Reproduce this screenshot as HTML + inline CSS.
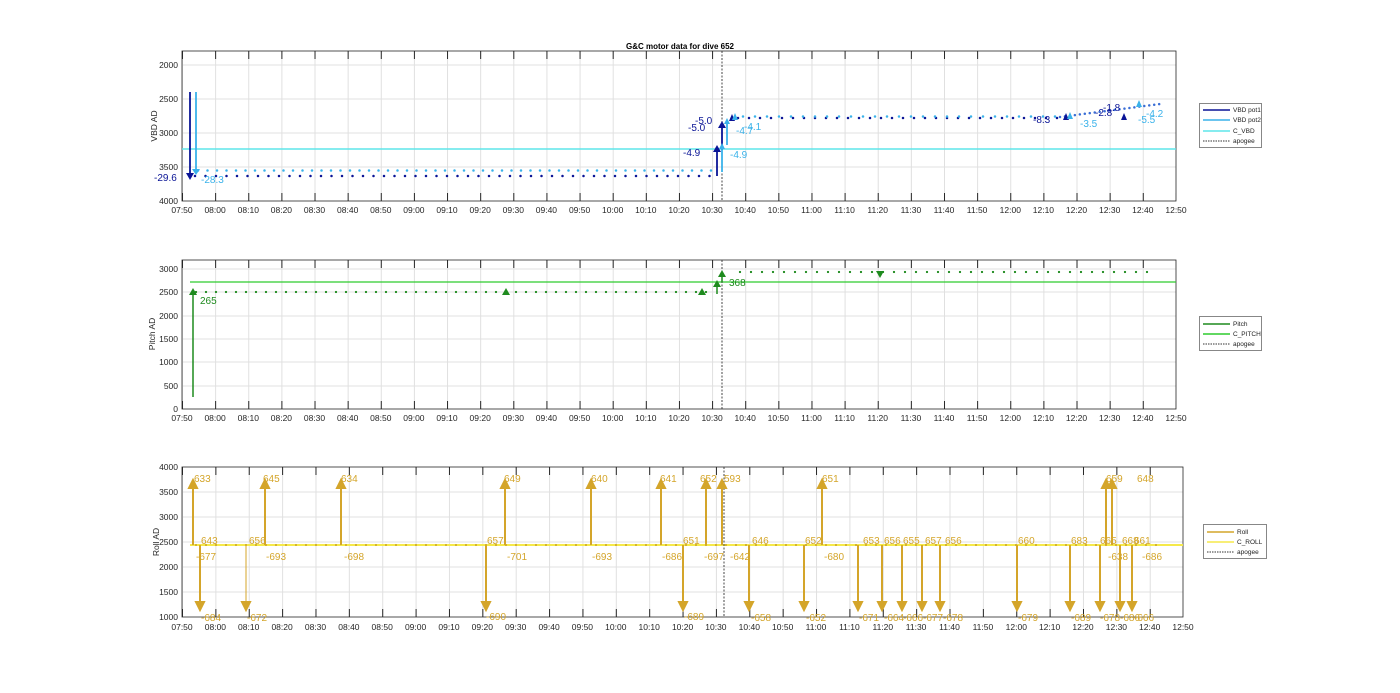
<!DOCTYPE html>
<html><head><meta charset="utf-8"><style>
html,body{margin:0;padding:0;background:#fff;}
svg{display:block;font-family:"Liberation Sans",sans-serif;}
.t{font-size:8.5px;fill:#262626;}
.g{stroke:#e0e0e0;stroke-width:1;}
.ax{fill:none;stroke:#262626;stroke-width:0.8;}
</style></head><body>
<svg width="1400" height="693" viewBox="0 0 1400 693">
<defs>
<pattern id="vg" x="182" y="0" width="33.13" height="700" patternUnits="userSpaceOnUse"><line x1="0.5" y1="0" x2="0.5" y2="700" stroke="#e0e0e0"/></pattern>
<pattern id="vg3" x="182" y="0" width="33.37" height="700" patternUnits="userSpaceOnUse"><line x1="0.5" y1="0" x2="0.5" y2="700" stroke="#e0e0e0"/></pattern>
<pattern id="tk" x="182" y="0" width="33.13" height="700" patternUnits="userSpaceOnUse"><line x1="0.5" y1="0" x2="0.5" y2="700" stroke="#262626"/></pattern>
<pattern id="tk3" x="182" y="0" width="33.37" height="700" patternUnits="userSpaceOnUse"><line x1="0.5" y1="0" x2="0.5" y2="700" stroke="#262626"/></pattern>
</defs>
<text x="680" y="49" font-size="8" font-weight="bold" text-anchor="middle" fill="#000">G&amp;C motor data for dive 652</text>

<!-- TOP AXES -->
<rect x="182" y="51" width="994" height="150" fill="url(#vg)"/>
<g class="g"><line x1="182" y1="65" x2="1176" y2="65"/><line x1="182" y1="99" x2="1176" y2="99"/><line x1="182" y1="133" x2="1176" y2="133"/><line x1="182" y1="167" x2="1176" y2="167"/></g>
<rect x="182" y="51" width="994" height="8" fill="url(#tk)"/><rect x="182" y="193" width="994" height="8" fill="url(#tk)"/>
<rect x="182" y="51" width="994" height="150" class="ax"/>
<line x1="182" y1="149" x2="1176" y2="149" stroke="#5ee6ea" stroke-width="1.5"/>
<line x1="722" y1="51" x2="722" y2="201" stroke="#333" stroke-dasharray="2 1.5" stroke-width="0.9"/>
<line x1="195" y1="176" x2="712" y2="176" stroke="#0a1496" stroke-width="2.5" stroke-linecap="round" stroke-dasharray="0 10.5"/>
<line x1="198" y1="170.5" x2="712" y2="170.5" stroke="#3ab2ea" stroke-width="2.5" stroke-linecap="round" stroke-dasharray="0 9.5"/>
<line x1="738" y1="118" x2="1060" y2="118" stroke="#0a1496" stroke-width="2.5" stroke-linecap="round" stroke-dasharray="0 11"/>
<line x1="743" y1="116.5" x2="1060" y2="116.5" stroke="#3ab2ea" stroke-width="2.5" stroke-linecap="round" stroke-dasharray="0 12"/>
<line x1="1060" y1="117" x2="1160" y2="104" stroke="#3a6ed6" stroke-width="2.5" stroke-linecap="round" stroke-dasharray="0 5"/>
<line x1="190" y1="92" x2="190" y2="176" stroke="#0a1496" stroke-width="1.8"/>
<polygon points="186,173 194,173 190,180" fill="#0a1496"/>
<line x1="196" y1="92" x2="196" y2="172" stroke="#3ab2ea" stroke-width="1.8"/>
<polygon points="192,169 200,169 196,175" fill="#3ab2ea"/>
<line x1="717" y1="176" x2="717" y2="150" stroke="#0a1496" stroke-width="1.8"/><polygon points="713,152 721,152 717,145" fill="#0a1496"/>
<line x1="722" y1="150" x2="722" y2="126" stroke="#0a1496" stroke-width="1.8"/><polygon points="718,128 726,128 722,121" fill="#0a1496"/>
<line x1="722" y1="172" x2="722" y2="148" stroke="#3ab2ea" stroke-width="1.8"/><polygon points="719,149 725,149 722,143" fill="#3ab2ea"/>
<line x1="727" y1="145" x2="727" y2="122" stroke="#3ab2ea" stroke-width="1.8"/><polygon points="724,124 730,124 727,118" fill="#3ab2ea"/>
<polygon points="729,121 735,121 732,114" fill="#0a1496"/><polygon points="732,120 738,120 735,113" fill="#3ab2ea"/>
<polygon points="1063,120 1069,120 1066,113" fill="#0a1496"/><polygon points="1067,119 1073,119 1070,112" fill="#3ab2ea"/>
<polygon points="1121,120 1127,120 1124,113" fill="#0a1496"/><polygon points="1136,107 1142,107 1139,100" fill="#3ab2ea"/>
<g font-size="10"><text x="154" y="181" fill="#0a1496">-29.6</text><text x="201" y="183" fill="#3ab2ea">-28.3</text>
<text x="683" y="156" fill="#0a1496">-4.9</text><text x="730" y="158" fill="#3ab2ea">-4.9</text>
<text x="688" y="131" fill="#0a1496">-5.0</text><text x="695" y="124" fill="#0a1496">-5.0</text>
<text x="736" y="134" fill="#3ab2ea">-4.7</text><text x="744" y="130" fill="#3ab2ea">-4.1</text>
<text x="1033" y="123" fill="#0a1496">-8.3</text><text x="1080" y="127" fill="#3ab2ea">-3.5</text>
<text x="1095" y="116" fill="#0a1496">-2.8</text><text x="1103" y="111" fill="#0a1496">-1.8</text>
<text x="1138" y="123" fill="#3ab2ea">-5.5</text><text x="1146" y="117" fill="#3ab2ea">-4.2</text></g>
<g class="t" text-anchor="end"><text x="178" y="68">2000</text><text x="178" y="102">2500</text><text x="178" y="136">3000</text><text x="178" y="170">3500</text><text x="178" y="204">4000</text></g>
<text class="t" transform="translate(157,126) rotate(-90)" text-anchor="middle">VBD AD</text>
<g class="t" text-anchor="middle">
<text x="182" y="213">07:50</text><text x="215.1" y="213">08:00</text><text x="248.3" y="213">08:10</text><text x="281.4" y="213">08:20</text><text x="314.5" y="213">08:30</text><text x="347.7" y="213">08:40</text><text x="380.8" y="213">08:50</text><text x="413.9" y="213">09:00</text><text x="447" y="213">09:10</text><text x="480.2" y="213">09:20</text><text x="513.3" y="213">09:30</text><text x="546.4" y="213">09:40</text><text x="579.6" y="213">09:50</text><text x="612.7" y="213">10:00</text><text x="645.8" y="213">10:10</text><text x="679" y="213">10:20</text><text x="712.1" y="213">10:30</text><text x="745.2" y="213">10:40</text><text x="778.3" y="213">10:50</text><text x="811.5" y="213">11:00</text><text x="844.6" y="213">11:10</text><text x="877.7" y="213">11:20</text><text x="910.9" y="213">11:30</text><text x="944" y="213">11:40</text><text x="977.1" y="213">11:50</text><text x="1010.3" y="213">12:00</text><text x="1043.4" y="213">12:10</text><text x="1076.5" y="213">12:20</text><text x="1109.7" y="213">12:30</text><text x="1142.8" y="213">12:40</text><text x="1176" y="213">12:50</text></g>
<rect x="1199.5" y="103.5" width="62" height="44" fill="#fff" stroke="#555" stroke-width="0.7"/>
<g font-size="6.5" fill="#222"><line x1="1203" y1="110" x2="1230" y2="110" stroke="#0a1496" stroke-width="1.5"/><text x="1233" y="112">VBD pot1</text>
<line x1="1203" y1="120" x2="1230" y2="120" stroke="#3ab2ea" stroke-width="1.5"/><text x="1233" y="122">VBD pot2</text>
<line x1="1203" y1="131" x2="1230" y2="131" stroke="#5ee6ea" stroke-width="1.5"/><text x="1233" y="133">C_VBD</text>
<line x1="1203" y1="141" x2="1230" y2="141" stroke="#333" stroke-dasharray="1.5 1"/><text x="1233" y="143">apogee</text></g>

<!-- MIDDLE AXES -->
<rect x="182" y="260" width="994" height="149" fill="url(#vg)"/>
<g class="g"><line x1="182" y1="269" x2="1176" y2="269"/><line x1="182" y1="292" x2="1176" y2="292"/><line x1="182" y1="316" x2="1176" y2="316"/><line x1="182" y1="339" x2="1176" y2="339"/><line x1="182" y1="362" x2="1176" y2="362"/><line x1="182" y1="386" x2="1176" y2="386"/></g>
<rect x="182" y="260" width="994" height="8" fill="url(#tk)"/><rect x="182" y="401" width="994" height="8" fill="url(#tk)"/>
<rect x="182" y="260" width="994" height="149" class="ax"/>
<line x1="190" y1="282" x2="1176" y2="282" stroke="#2ecc2e" stroke-width="1.3"/>
<line x1="722" y1="260" x2="722" y2="409" stroke="#333" stroke-dasharray="2 1.5" stroke-width="0.9"/>
<line x1="196" y1="292" x2="712" y2="292" stroke="#1e8a1e" stroke-width="2.3" stroke-linecap="round" stroke-dasharray="0 10"/>
<line x1="740" y1="272" x2="1150" y2="272" stroke="#1e8a1e" stroke-width="2.3" stroke-linecap="round" stroke-dasharray="0 11"/>
<line x1="193" y1="397" x2="193" y2="292" stroke="#1e8a1e" stroke-width="1.5"/><polygon points="189,295 197,295 193,288" fill="#1e8a1e"/>
<line x1="717" y1="294" x2="717" y2="284" stroke="#1e8a1e" stroke-width="1.5"/><polygon points="713,287 721,287 717,280" fill="#1e8a1e"/>
<line x1="722" y1="282" x2="722" y2="276" stroke="#1e8a1e" stroke-width="1.5"/><polygon points="718,277 726,277 722,270" fill="#1e8a1e"/>
<polygon points="502,295 510,295 506,288" fill="#1e8a1e"/><polygon points="698,295 706,295 702,288" fill="#1e8a1e"/>
<polygon points="876,271 884,271 880,278" fill="#1e8a1e"/>
<text x="200" y="304" font-size="10" fill="#1e8a1e">265</text><text x="729" y="286" font-size="10" fill="#1e8a1e">368</text>
<g class="t" text-anchor="end"><text x="178" y="272">3000</text><text x="178" y="295">2500</text><text x="178" y="319">2000</text><text x="178" y="342">1500</text><text x="178" y="365">1000</text><text x="178" y="389">500</text><text x="178" y="412">0</text></g>
<text class="t" transform="translate(155,334) rotate(-90)" text-anchor="middle">Pitch AD</text>
<g class="t" text-anchor="middle">
<text x="182" y="421">07:50</text><text x="215.1" y="421">08:00</text><text x="248.3" y="421">08:10</text><text x="281.4" y="421">08:20</text><text x="314.5" y="421">08:30</text><text x="347.7" y="421">08:40</text><text x="380.8" y="421">08:50</text><text x="413.9" y="421">09:00</text><text x="447" y="421">09:10</text><text x="480.2" y="421">09:20</text><text x="513.3" y="421">09:30</text><text x="546.4" y="421">09:40</text><text x="579.6" y="421">09:50</text><text x="612.7" y="421">10:00</text><text x="645.8" y="421">10:10</text><text x="679" y="421">10:20</text><text x="712.1" y="421">10:30</text><text x="745.2" y="421">10:40</text><text x="778.3" y="421">10:50</text><text x="811.5" y="421">11:00</text><text x="844.6" y="421">11:10</text><text x="877.7" y="421">11:20</text><text x="910.9" y="421">11:30</text><text x="944" y="421">11:40</text><text x="977.1" y="421">11:50</text><text x="1010.3" y="421">12:00</text><text x="1043.4" y="421">12:10</text><text x="1076.5" y="421">12:20</text><text x="1109.7" y="421">12:30</text><text x="1142.8" y="421">12:40</text><text x="1176" y="421">12:50</text></g>
<rect x="1199.5" y="316.5" width="62" height="34" fill="#fff" stroke="#555" stroke-width="0.7"/>
<g font-size="6.5" fill="#222"><line x1="1203" y1="324" x2="1230" y2="324" stroke="#1e8a1e" stroke-width="1.5"/><text x="1233" y="326">Pitch</text>
<line x1="1203" y1="334" x2="1230" y2="334" stroke="#2ecc2e" stroke-width="1.5"/><text x="1233" y="336">C_PITCH</text>
<line x1="1203" y1="344" x2="1230" y2="344" stroke="#333" stroke-dasharray="1.5 1"/><text x="1233" y="346">apogee</text></g>

<!-- BOTTOM AXES -->
<rect x="182" y="467" width="1001" height="150" fill="url(#vg3)"/>
<g class="g"><line x1="182" y1="492" x2="1183" y2="492"/><line x1="182" y1="517" x2="1183" y2="517"/><line x1="182" y1="542" x2="1183" y2="542"/><line x1="182" y1="567" x2="1183" y2="567"/><line x1="182" y1="592" x2="1183" y2="592"/></g>
<rect x="182" y="467" width="1001" height="8" fill="url(#tk3)"/><rect x="182" y="609" width="1001" height="8" fill="url(#tk3)"/>
<rect x="182" y="467" width="1001" height="150" class="ax"/>
<line x1="190" y1="545" x2="1183" y2="545" stroke="#f5e94a" stroke-width="2"/>
<line x1="724" y1="467" x2="724" y2="617" stroke="#333" stroke-dasharray="2 1.5" stroke-width="0.9"/>
<line x1="196" y1="545" x2="1160" y2="545" stroke="#c9a227" stroke-width="2" stroke-linecap="round" stroke-dasharray="0 10"/>
<g stroke="#d4a52a" stroke-width="2" fill="#d4a52a">
<line x1="193" y1="545" x2="193" y2="485"/><polygon points="189,488 197,488 193,480"/>
<line x1="200" y1="545" x2="200" y2="605"/><polygon points="196,602 204,602 200,610"/>
<line x1="246" y1="545" x2="246" y2="605" stroke-width="1"/><polygon points="242,602 250,602 246,610"/>
<line x1="265" y1="545" x2="265" y2="485"/><polygon points="261,488 269,488 265,480"/>
<line x1="341" y1="545" x2="341" y2="485"/><polygon points="337,488 345,488 341,480"/>
<line x1="486" y1="545" x2="486" y2="605"/><polygon points="482,602 490,602 486,610"/>
<line x1="505" y1="545" x2="505" y2="485"/><polygon points="501,488 509,488 505,480"/>
<line x1="591" y1="545" x2="591" y2="485"/><polygon points="587,488 595,488 591,480"/>
<line x1="661" y1="545" x2="661" y2="485"/><polygon points="657,488 665,488 661,480"/>
<line x1="683" y1="545" x2="683" y2="605"/><polygon points="679,602 687,602 683,610"/>
<line x1="706" y1="545" x2="706" y2="485"/><polygon points="702,488 710,488 706,480"/>
<line x1="722" y1="545" x2="722" y2="485"/><polygon points="718,488 726,488 722,480"/>
<line x1="749" y1="545" x2="749" y2="605"/><polygon points="745,602 753,602 749,610"/>
<line x1="804" y1="545" x2="804" y2="605"/><polygon points="800,602 808,602 804,610"/>
<line x1="822" y1="545" x2="822" y2="485"/><polygon points="818,488 826,488 822,480"/>
<line x1="858" y1="545" x2="858" y2="605"/><polygon points="854,602 862,602 858,610"/>
<line x1="882" y1="545" x2="882" y2="605"/><polygon points="878,602 886,602 882,610"/>
<line x1="902" y1="545" x2="902" y2="605"/><polygon points="898,602 906,602 902,610"/>
<line x1="922" y1="545" x2="922" y2="605"/><polygon points="918,602 926,602 922,610"/>
<line x1="940" y1="545" x2="940" y2="605"/><polygon points="936,602 944,602 940,610"/>
<line x1="1017" y1="545" x2="1017" y2="605"/><polygon points="1013,602 1021,602 1017,610"/>
<line x1="1070" y1="545" x2="1070" y2="605"/><polygon points="1066,602 1074,602 1070,610"/>
<line x1="1100" y1="545" x2="1100" y2="605"/><polygon points="1096,602 1104,602 1100,610"/>
<line x1="1106" y1="545" x2="1106" y2="485"/><polygon points="1102,488 1110,488 1106,480"/>
<line x1="1112" y1="545" x2="1112" y2="485"/><polygon points="1108,488 1116,488 1112,480"/>
<line x1="1120" y1="545" x2="1120" y2="605"/><polygon points="1116,602 1124,602 1120,610"/>
<line x1="1132" y1="545" x2="1132" y2="605"/><polygon points="1128,602 1136,602 1132,610"/>
</g>
<g font-size="10" fill="#d4a52a">
<text x="194" y="482">633</text><text x="263" y="482">645</text><text x="341" y="482">634</text><text x="504" y="482">649</text><text x="591" y="482">640</text><text x="660" y="482">641</text><text x="700" y="482">652</text><text x="724" y="482">593</text><text x="822" y="482">651</text><text x="1106" y="482">659</text><text x="1137" y="482">648</text>
<text x="201" y="544">643</text><text x="249" y="544">656</text><text x="487" y="544">657</text><text x="683" y="544">651</text><text x="752" y="544">646</text><text x="805" y="544">652</text><text x="863" y="544">653</text><text x="884" y="544">656</text><text x="903" y="544">655</text><text x="925" y="544">657</text><text x="945" y="544">656</text><text x="1018" y="544">660</text><text x="1071" y="544">683</text><text x="1100" y="544">665</text><text x="1122" y="544">668</text><text x="1134" y="544">661</text>
<text x="196" y="560">-677</text><text x="266" y="560">-693</text><text x="344" y="560">-698</text><text x="507" y="560">-701</text><text x="592" y="560">-693</text><text x="662" y="560">-686</text><text x="704" y="560">-697</text><text x="730" y="560">-642</text><text x="824" y="560">-680</text><text x="1108" y="560">-638</text><text x="1142" y="560">-686</text>
<text x="201" y="621">-684</text><text x="247" y="621">-672</text><text x="486" y="620">-690</text><text x="684" y="620">-689</text><text x="751" y="621">-658</text><text x="806" y="621">-652</text><text x="859" y="621">-671</text><text x="884" y="621">-664</text><text x="903" y="621">-666</text><text x="923" y="621">-677</text><text x="943" y="621">-678</text><text x="1018" y="621">-679</text><text x="1071" y="621">-689</text><text x="1100" y="621">-678</text><text x="1120" y="621">-686</text><text x="1134" y="621">-666</text>
</g>
<g class="t" text-anchor="end"><text x="178" y="470">4000</text><text x="178" y="495">3500</text><text x="178" y="520">3000</text><text x="178" y="545">2500</text><text x="178" y="570">2000</text><text x="178" y="595">1500</text><text x="178" y="620">1000</text></g>
<text class="t" transform="translate(159,542) rotate(-90)" text-anchor="middle">Roll AD</text>
<g class="t" text-anchor="middle">
<text x="182" y="630">07:50</text><text x="215.4" y="630">08:00</text><text x="248.7" y="630">08:10</text><text x="282.1" y="630">08:20</text><text x="315.5" y="630">08:30</text><text x="348.9" y="630">08:40</text><text x="382.2" y="630">08:50</text><text x="415.6" y="630">09:00</text><text x="449" y="630">09:10</text><text x="482.3" y="630">09:20</text><text x="515.7" y="630">09:30</text><text x="549.1" y="630">09:40</text><text x="582.4" y="630">09:50</text><text x="615.8" y="630">10:00</text><text x="649.2" y="630">10:10</text><text x="682.6" y="630">10:20</text><text x="715.9" y="630">10:30</text><text x="749.3" y="630">10:40</text><text x="782.7" y="630">10:50</text><text x="816" y="630">11:00</text><text x="849.4" y="630">11:10</text><text x="882.8" y="630">11:20</text><text x="916.1" y="630">11:30</text><text x="949.5" y="630">11:40</text><text x="982.9" y="630">11:50</text><text x="1016.3" y="630">12:00</text><text x="1049.6" y="630">12:10</text><text x="1083" y="630">12:20</text><text x="1116.4" y="630">12:30</text><text x="1149.7" y="630">12:40</text><text x="1183" y="630">12:50</text></g>
<rect x="1203.5" y="524.5" width="63" height="34" fill="#fff" stroke="#555" stroke-width="0.7"/>
<g font-size="6.5" fill="#222"><line x1="1207" y1="532" x2="1234" y2="532" stroke="#d4a52a" stroke-width="1.5"/><text x="1237" y="534">Roll</text>
<line x1="1207" y1="542" x2="1234" y2="542" stroke="#f5e94a" stroke-width="1.5"/><text x="1237" y="544">C_ROLL</text>
<line x1="1207" y1="552" x2="1234" y2="552" stroke="#333" stroke-dasharray="1.5 1"/><text x="1237" y="554">apogee</text></g>
</svg>
</body></html>
